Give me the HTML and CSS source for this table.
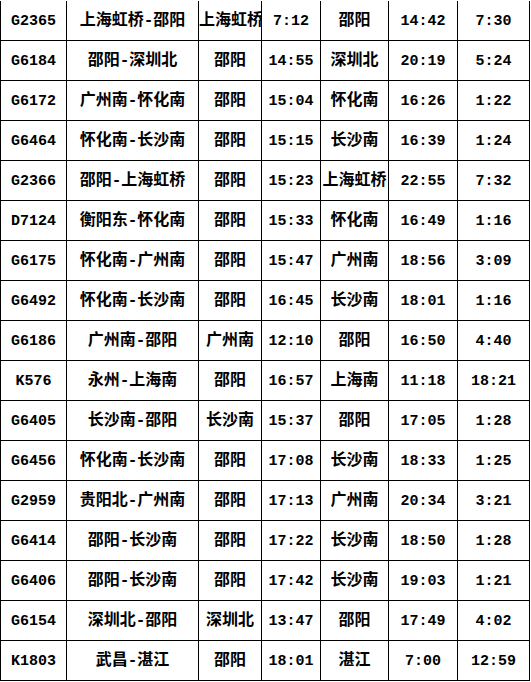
FILE: index.html
```html
<!DOCTYPE html>
<html lang="zh-CN">
<head>
<meta charset="utf-8">
<title>列车时刻表</title>
<link rel="stylesheet" href="styles.css">
</head>
<body>
<div class="timetable">
  <div class="c n first">G2365</div><div class="c">上海虹桥-邵阳</div><div class="c">上海虹桥</div><div class="c n">7:12</div><div class="c">邵阳</div><div class="c n">14:42</div><div class="c n">7:30</div>
  <div class="c n first">G6184</div><div class="c">邵阳-深圳北</div><div class="c">邵阳</div><div class="c n">14:55</div><div class="c">深圳北</div><div class="c n">20:19</div><div class="c n">5:24</div>
  <div class="c n first">G6172</div><div class="c">广州南-怀化南</div><div class="c">邵阳</div><div class="c n">15:04</div><div class="c">怀化南</div><div class="c n">16:26</div><div class="c n">1:22</div>
  <div class="c n first">G6464</div><div class="c">怀化南-长沙南</div><div class="c">邵阳</div><div class="c n">15:15</div><div class="c">长沙南</div><div class="c n">16:39</div><div class="c n">1:24</div>
  <div class="c n first">G2366</div><div class="c">邵阳-上海虹桥</div><div class="c">邵阳</div><div class="c n">15:23</div><div class="c">上海虹桥</div><div class="c n">22:55</div><div class="c n">7:32</div>
  <div class="c n first">D7124</div><div class="c">衡阳东-怀化南</div><div class="c">邵阳</div><div class="c n">15:33</div><div class="c">怀化南</div><div class="c n">16:49</div><div class="c n">1:16</div>
  <div class="c n first">G6175</div><div class="c">怀化南-广州南</div><div class="c">邵阳</div><div class="c n">15:47</div><div class="c">广州南</div><div class="c n">18:56</div><div class="c n">3:09</div>
  <div class="c n first">G6492</div><div class="c">怀化南-长沙南</div><div class="c">邵阳</div><div class="c n">16:45</div><div class="c">长沙南</div><div class="c n">18:01</div><div class="c n">1:16</div>
  <div class="c n first">G6186</div><div class="c">广州南-邵阳</div><div class="c">广州南</div><div class="c n">12:10</div><div class="c">邵阳</div><div class="c n">16:50</div><div class="c n">4:40</div>
  <div class="c n first">K576</div><div class="c">永州-上海南</div><div class="c">邵阳</div><div class="c n">16:57</div><div class="c">上海南</div><div class="c n">11:18</div><div class="c n">18:21</div>
  <div class="c n first">G6405</div><div class="c">长沙南-邵阳</div><div class="c">长沙南</div><div class="c n">15:37</div><div class="c">邵阳</div><div class="c n">17:05</div><div class="c n">1:28</div>
  <div class="c n first">G6456</div><div class="c">怀化南-长沙南</div><div class="c">邵阳</div><div class="c n">17:08</div><div class="c">长沙南</div><div class="c n">18:33</div><div class="c n">1:25</div>
  <div class="c n first">G2959</div><div class="c">贵阳北-广州南</div><div class="c">邵阳</div><div class="c n">17:13</div><div class="c">广州南</div><div class="c n">20:34</div><div class="c n">3:21</div>
  <div class="c n first">G6414</div><div class="c">邵阳-长沙南</div><div class="c">邵阳</div><div class="c n">17:22</div><div class="c">长沙南</div><div class="c n">18:50</div><div class="c n">1:28</div>
  <div class="c n first">G6406</div><div class="c">邵阳-长沙南</div><div class="c">邵阳</div><div class="c n">17:42</div><div class="c">长沙南</div><div class="c n">19:03</div><div class="c n">1:21</div>
  <div class="c n first">G6154</div><div class="c">深圳北-邵阳</div><div class="c">深圳北</div><div class="c n">13:47</div><div class="c">邵阳</div><div class="c n">17:49</div><div class="c n">4:02</div>
  <div class="c n first">K1803</div><div class="c">武昌-湛江</div><div class="c">邵阳</div><div class="c n">18:01</div><div class="c">湛江</div><div class="c n">7:00</div><div class="c n">12:59</div>
</div>
</body>
</html>
```
FILE: styles.css
```css
html, body {
  margin: 0;
  padding: 0;
  background: #fff;
}

.timetable {
  display: grid;
  grid-template-columns: 67px 132px 63px 59px 68px 69px 72px;
  grid-auto-rows: 40px;
  padding-top: 1px;
  width: 530px;
  font-family: "Liberation Mono", "Noto Sans CJK SC", monospace;
  font-weight: bold;
  font-size: 16px;
  color: #000;
}

.c {
  box-sizing: border-box;
  border-right: 1px solid #000;
  border-bottom: 1px solid #000;
  padding-top: 2px;
  line-height: 37px;
  text-align: center;
  white-space: nowrap;
  overflow: hidden;
}

.c.first {
  border-left: 1px solid #000;
}

.c.n {
  font-size: 15px;
}
```
